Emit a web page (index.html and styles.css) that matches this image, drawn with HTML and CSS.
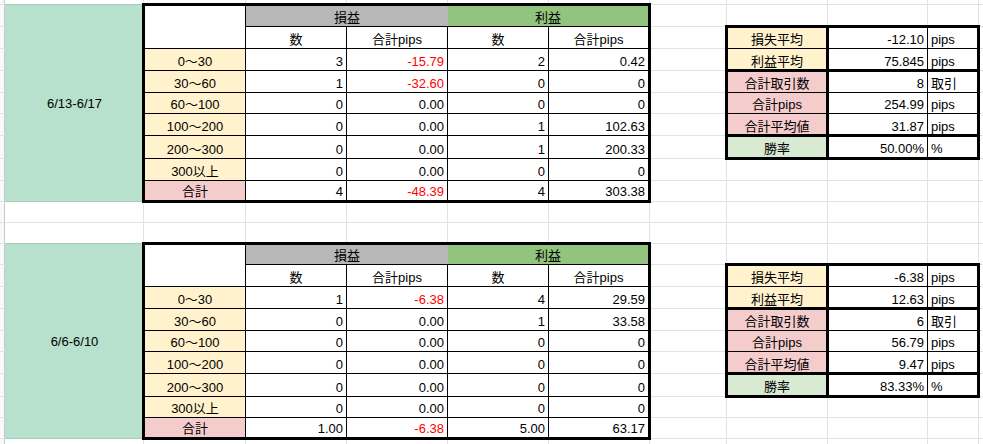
FILE: index.html
```html
<!DOCTYPE html>
<html lang="ja">
<head>
<meta charset="utf-8">
<title>損益集計</title>
<link rel="stylesheet" href="styles.css">
</head>
<body>
<div class="sheet">
  <div class="date d1">6/13-6/17</div>
  <div class="pl t1">
    <div class="row">
      <div class="c corner"></div>
      <div class="c grp loss">損益</div>
      <div class="c grp gain">利益</div>
    </div>
    <div class="row">
      <div class="c hd">数</div><div class="c hd">合計pips</div><div class="c hd">数</div><div class="c hd">合計pips</div>
    </div>
    <div class="row"><div class="c lbl">0〜30</div><div class="c num">3</div><div class="c num neg">-15.79</div><div class="c num">2</div><div class="c num">0.42</div></div>
    <div class="row"><div class="c lbl">30〜60</div><div class="c num">1</div><div class="c num neg">-32.60</div><div class="c num">0</div><div class="c num">0</div></div>
    <div class="row"><div class="c lbl">60〜100</div><div class="c num">0</div><div class="c num">0.00</div><div class="c num">0</div><div class="c num">0</div></div>
    <div class="row"><div class="c lbl">100〜200</div><div class="c num">0</div><div class="c num">0.00</div><div class="c num">1</div><div class="c num">102.63</div></div>
    <div class="row"><div class="c lbl">200〜300</div><div class="c num">0</div><div class="c num">0.00</div><div class="c num">1</div><div class="c num">200.33</div></div>
    <div class="row"><div class="c lbl">300以上</div><div class="c num">0</div><div class="c num">0.00</div><div class="c num">0</div><div class="c num">0</div></div>
    <div class="row"><div class="c lbl sum">合計</div><div class="c num">4</div><div class="c num neg">-48.39</div><div class="c num">4</div><div class="c num">303.38</div></div>
  </div>
  <div class="stats s1">
    <div class="row"><div class="c lbl">損失平均</div><div class="c num">-12.10</div><div class="c unit">pips</div></div>
    <div class="row gb"><div class="c lbl">利益平均</div><div class="c num">75.845</div><div class="c unit">pips</div></div>
    <div class="row"><div class="c lbl sum">合計取引数</div><div class="c num">8</div><div class="c unit">取引</div></div>
    <div class="row"><div class="c lbl sum">合計pips</div><div class="c num">254.99</div><div class="c unit">pips</div></div>
    <div class="row gb"><div class="c lbl sum">合計平均値</div><div class="c num">31.87</div><div class="c unit">pips</div></div>
    <div class="row"><div class="c lbl win">勝率</div><div class="c num">50.00%</div><div class="c unit">%</div></div>
  </div>

  <div class="date d2">6/6-6/10</div>
  <div class="pl t2">
    <div class="row">
      <div class="c corner"></div>
      <div class="c grp loss">損益</div>
      <div class="c grp gain">利益</div>
    </div>
    <div class="row">
      <div class="c hd">数</div><div class="c hd">合計pips</div><div class="c hd">数</div><div class="c hd">合計pips</div>
    </div>
    <div class="row"><div class="c lbl">0〜30</div><div class="c num">1</div><div class="c num neg">-6.38</div><div class="c num">4</div><div class="c num">29.59</div></div>
    <div class="row"><div class="c lbl">30〜60</div><div class="c num">0</div><div class="c num">0.00</div><div class="c num">1</div><div class="c num">33.58</div></div>
    <div class="row"><div class="c lbl">60〜100</div><div class="c num">0</div><div class="c num">0.00</div><div class="c num">0</div><div class="c num">0</div></div>
    <div class="row"><div class="c lbl">100〜200</div><div class="c num">0</div><div class="c num">0.00</div><div class="c num">0</div><div class="c num">0</div></div>
    <div class="row"><div class="c lbl">200〜300</div><div class="c num">0</div><div class="c num">0.00</div><div class="c num">0</div><div class="c num">0</div></div>
    <div class="row"><div class="c lbl">300以上</div><div class="c num">0</div><div class="c num">0.00</div><div class="c num">0</div><div class="c num">0</div></div>
    <div class="row"><div class="c lbl sum">合計</div><div class="c num">1.00</div><div class="c num neg">-6.38</div><div class="c num">5.00</div><div class="c num">63.17</div></div>
  </div>
  <div class="stats s2">
    <div class="row"><div class="c lbl">損失平均</div><div class="c num">-6.38</div><div class="c unit">pips</div></div>
    <div class="row gb"><div class="c lbl">利益平均</div><div class="c num">12.63</div><div class="c unit">pips</div></div>
    <div class="row"><div class="c lbl sum">合計取引数</div><div class="c num">6</div><div class="c unit">取引</div></div>
    <div class="row"><div class="c lbl sum">合計pips</div><div class="c num">56.79</div><div class="c unit">pips</div></div>
    <div class="row gb"><div class="c lbl sum">合計平均値</div><div class="c num">9.47</div><div class="c unit">pips</div></div>
    <div class="row"><div class="c lbl win">勝率</div><div class="c num">83.33%</div><div class="c unit">%</div></div>
  </div>
</div>
</body>
</html>
```

FILE: styles.css
```css
* { box-sizing: border-box; }

html, body {
  margin: 0;
  padding: 0;
  background: #fff;
}

body {
  width: 983px;
  height: 444px;
  overflow: hidden;
  font-family: "Liberation Sans", "Noto Sans CJK JP", sans-serif;
  font-size: 13px;
  color: #000;
}

.sheet {
  display: grid;
  width: 983px;
  height: 444px;
  grid-template-columns: 5px 139px 102px 101px 101px 101px 101px 77px 101px 100px 51px 4px;
  grid-template-rows: 5px 22px 22px 22px 22px 21px 22px 23px 22px 21px 21px 21px 21px 22px 22px 22px 21px 22px 23px 21px 21px 5px;
  background-color: #fff;
  background-image:
    linear-gradient(to bottom,
      transparent 0 4px, #e2e2e2 4px 5px,
      transparent 5px 26px, #e2e2e2 26px 27px,
      transparent 27px 48px, #e2e2e2 48px 49px,
      transparent 49px 70px, #e2e2e2 70px 71px,
      transparent 71px 92px, #e2e2e2 92px 93px,
      transparent 93px 113px, #e2e2e2 113px 114px,
      transparent 114px 135px, #e2e2e2 135px 136px,
      transparent 136px 158px, #e2e2e2 158px 159px,
      transparent 159px 180px, #e2e2e2 180px 181px,
      transparent 181px 201px, #e2e2e2 201px 202px,
      transparent 202px 222px, #e2e2e2 222px 223px,
      transparent 223px 243px, #e2e2e2 243px 244px,
      transparent 244px 264px, #e2e2e2 264px 265px,
      transparent 265px 286px, #e2e2e2 286px 287px,
      transparent 287px 308px, #e2e2e2 308px 309px,
      transparent 309px 330px, #e2e2e2 330px 331px,
      transparent 331px 351px, #e2e2e2 351px 352px,
      transparent 352px 373px, #e2e2e2 373px 374px,
      transparent 374px 396px, #e2e2e2 396px 397px,
      transparent 397px 417px, #e2e2e2 417px 418px,
      transparent 418px 438px, #e2e2e2 438px 439px,
      transparent 439px),
    linear-gradient(to right,
      #f8f9fa 0 4px, #c6c8ca 4px 5px,
      transparent 5px 143px, #e2e2e2 143px 144px,
      transparent 144px 245px, #e2e2e2 245px 246px,
      transparent 246px 346px, #e2e2e2 346px 347px,
      transparent 347px 447px, #e2e2e2 447px 448px,
      transparent 448px 548px, #e2e2e2 548px 549px,
      transparent 549px 649px, #e2e2e2 649px 650px,
      transparent 650px 726px, #e2e2e2 726px 727px,
      transparent 727px 827px, #e2e2e2 827px 828px,
      transparent 828px 927px, #e2e2e2 927px 928px,
      transparent 928px 978px, #e2e2e2 978px 979px,
      transparent 979px);
}

/* placement on the sheet */
.d1 { grid-column: 2; grid-row: 2 / 11; }
.t1 { grid-column: 3 / 8; grid-row: 2 / 11; }
.s1 { grid-column: 9 / 12; grid-row: 3 / 9; }
.d2 { grid-column: 2; grid-row: 13 / 22; }
.t2 { grid-column: 3 / 8; grid-row: 13 / 22; }
.s2 { grid-column: 9 / 12; grid-row: 14 / 20; }

.date {
  background: #b7e1cd;
  display: flex;
  align-items: center;
  justify-content: center;
  box-shadow: 0 -1px 0 #a6cdbb;
  border-bottom: 1px solid #a6cdbb;
  padding-top: 1px;
}

.row { display: contents; }

.pl, .stats {
  display: grid;
  margin: -2px -1px -1px -2px;
  border: 3px solid #000;
  overflow: hidden;
  background: #fff;
}

.pl { grid-template-columns: 101px 101px 101px 101px 100px; }
.t1 { grid-template-rows: 21px 22px 22px 22px 21px 22px 23px 22px 20px; }
.t2 { grid-template-rows: 20px 22px 22px 22px 21px 22px 23px 21px 20px; }

.stats {
  grid-template-columns: 101px 99px 50px;
  grid-template-rows: 21px 23px 21px 21px 23px 21px;
}

.c {
  display: flex;
  align-items: flex-end;
  padding: 0 3px 1px;
  line-height: 15px;
  white-space: nowrap;
  overflow: hidden;
  border-right: 1px solid #000;
  border-bottom: 1px solid #000;
}

.corner { grid-row: span 2; }
.grp { grid-column: span 2; justify-content: center; }
.loss { background: #b7b7b7; border-right: 0; }
.gain { background: #93c47d; }

.hd, .lbl { justify-content: center; }
.num { justify-content: flex-end; }
.unit { justify-content: flex-start; }

.lbl { background: #fff2cc; }
.lbl.sum { background: #f4cccc; }
.lbl.win { background: #d9ead3; }
.neg { color: #ff0000; }

.stats .lbl { border-right-width: 3px; }
.gb > .c { border-bottom-width: 3px; padding-bottom: 0; }
```
